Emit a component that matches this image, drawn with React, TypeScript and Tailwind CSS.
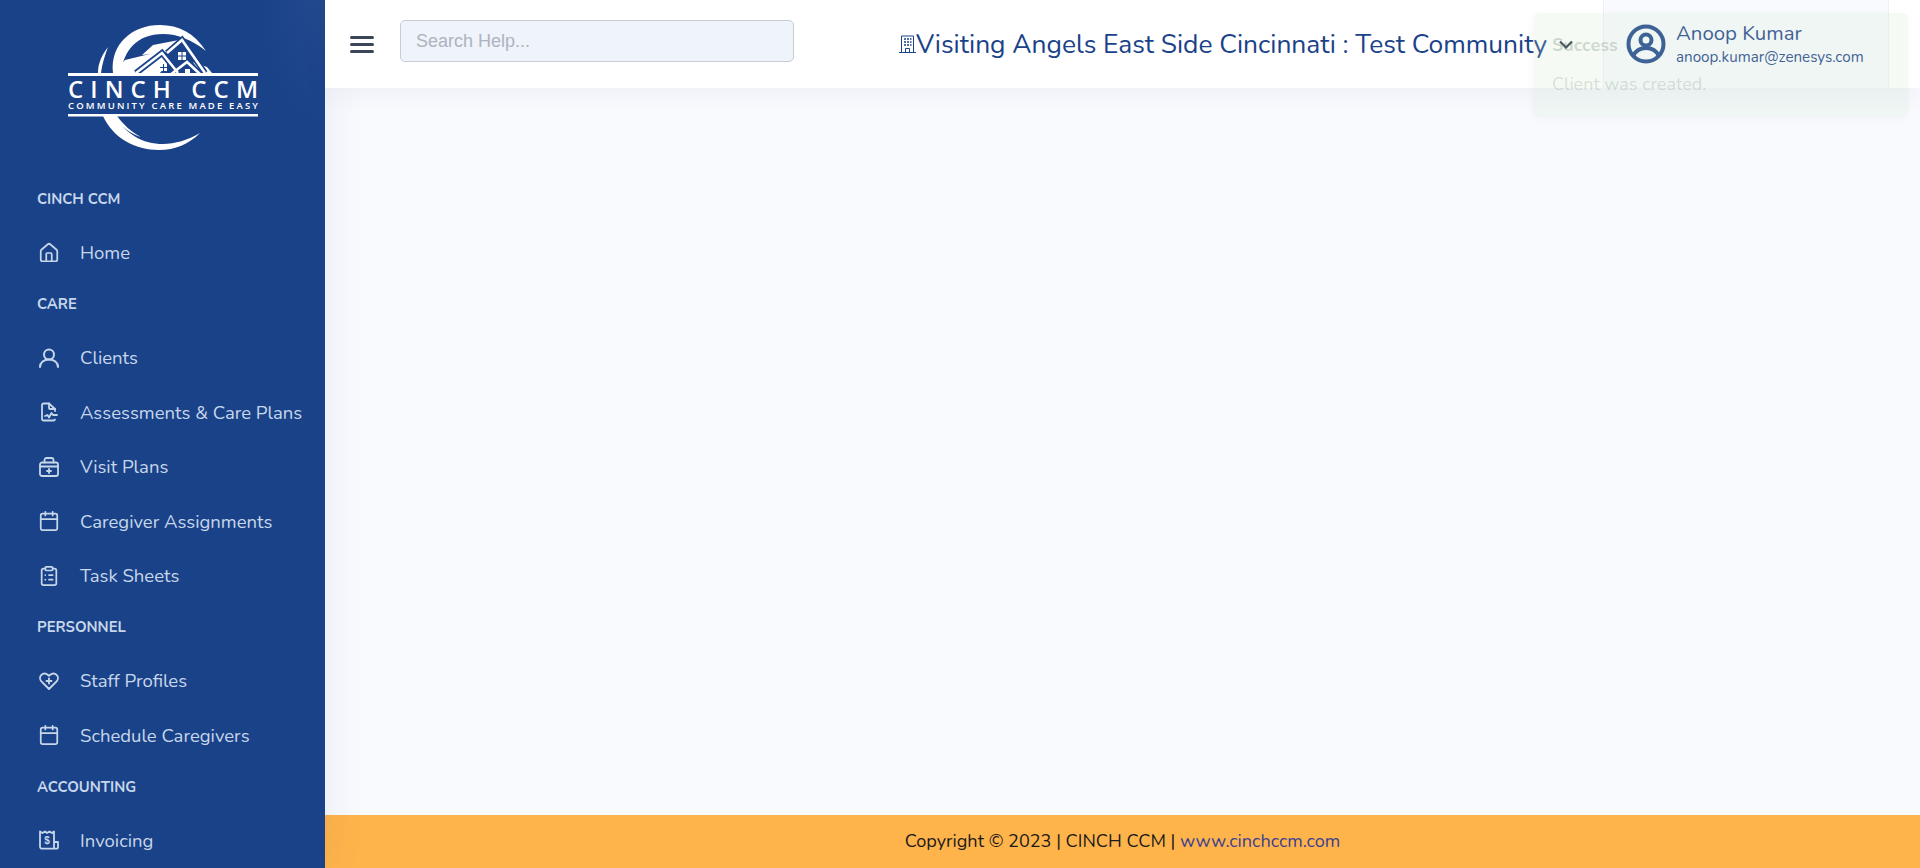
import React from "react";
import { House, Calendar, ClipboardList } from "lucide-react";

const font = "font-['Nunito','Lato','Open_Sans',sans-serif]";

function AssessIcon() {
  return (
    <svg width="20" height="20" viewBox="0 0 20 20" fill="none" stroke="currentColor" strokeWidth="1.8" strokeLinecap="round" strokeLinejoin="round">
      <path d="M16 17.5a1.5 1.5 0 0 1-1.5 1H4.5A1.5 1.5 0 0 1 3 17V3a1.5 1.5 0 0 1 1.5-1.5H10l6 5.5v2" />
      <path d="M10 1.5V6a1 1 0 0 0 1 1h5" />
      <path d="M6 14l2.5-1 1.5 2.5 2.5-4.5 1.5 2H18" />
    </svg>
  );
}

function UserIcon() {
  return (
    <svg width="20" height="20" viewBox="0 0 20 20" fill="none" stroke="currentColor" strokeWidth="2" strokeLinecap="round" strokeLinejoin="round">
      <circle cx="10" cy="6.5" r="5" />
      <path d="M1 19c0-4.5 4-7.500 9-7.500s9 3 9 7.500" />
    </svg>
  );
}

function KitIcon() {
  return (
    <svg width="20" height="20" viewBox="0 0 20 20" fill="none" stroke="currentColor" strokeWidth="1.8" strokeLinecap="round" strokeLinejoin="round">
      <rect x="1" y="5.5" width="18" height="13.5" rx="2" />
      <path d="M5.5 5.5V3a2 2 0 0 1 2-2h5a2 2 0 0 1 2 2v2.5" />
      <path d="M1 9.5h18" />
      <path d="M10 12v4M8 14h4" />
    </svg>
  );
}

function HeartPlusIcon() {
  return (
    <svg width="20" height="20" viewBox="0 0 20 20" fill="none" stroke="currentColor" strokeWidth="1.9" strokeLinecap="round" strokeLinejoin="round">
      <path d="M10 18 2.4 10.4a4.8 4.8 0 0 1 0-6.6 4.5 4.5 0 0 1 6.4 0l1.2 1 1.2-1a4.5 4.5 0 0 1 6.4 0 4.8 4.8 0 0 1 0 6.6z" />
      <path d="M10 7.5v5M7.5 10h5" />
    </svg>
  );
}

function ReceiptIcon() {
  return (
    <svg width="20" height="20" viewBox="0 0 20 20" fill="none" stroke="currentColor" strokeWidth="1.8" strokeLinecap="round" strokeLinejoin="round">
      <path d="M15 12h4v5.5a1.2 1.2 0 0 1-1.2 1.2H3a2 2 0 0 1-2-2V1.5l2.5 1.5L6 1.5 8 3l2.5-1.5L13 3l2-1.500v17" />
      <text x="8" y="14" textAnchor="middle" fontSize="10" fontWeight="700" fill="currentColor" stroke="none" fontFamily="Liberation Sans">$</text>
    </svg>
  );
}

function BuildingIcon() {
  return (
    <svg width="17" height="18" viewBox="0 0 17 18" fill="none" stroke="currentColor" strokeWidth="1" className="shrink-0">
      <path d="M0 17.5h17M2.5 17.5V1h12v16.5" />
      <path d="M5 4h2M8 4h2M11 4h1.5M5 7h2M8 7h2M11 7h1.5M5 10h2M8 10h2M11 10h1.5" strokeWidth="1.4" />
      <path d="M6.5 17.5v-4h4v4" />
    </svg>
  );
}

function Logo() {
  return (
    <svg width="200" height="130" viewBox="60 22 200 130">
      <path d="M113 73C110 44 132 25 160 25c19 0 34 8 46 26-14-11-28-17-43-17-26 0-40 17-42 39z" fill="#fff" />
      <path d="M98 73c0-10 4-18 10-26-3 8-6 17-7 26z" fill="#fff" />
      <path d="M103 116c10 22 32 34 56 34 16 0 30-6 41-17-12 7-25 11-37 11-20 0-38-10-47-28z" fill="#fff" />
      <path d="M117 116c6 8 14 16 24 21-10-3-20-10-27-21z" fill="#fff" />
      <path d="M113 73l12-13 33-8 12 8-10 13z" fill="#fff" />
      <path d="M142 55l11-10 26-5-12 12-7 1z" fill="#fff" />
      <path d="M193 62l14 5 5 6h-12z" fill="#fff" />
      <path d="M167 53 182 40 205 73" fill="none" stroke="#1a4289" strokeWidth="6" />
      <path d="M136 73 162 53 178 73" fill="none" stroke="#1a4289" strokeWidth="6" />
      <path d="M170 75 187 62 201 75" fill="none" stroke="#1a4289" strokeWidth="6" />
      <path d="M167 53 182 40 205 73" fill="none" stroke="#fff" strokeWidth="2.6" />
      <path d="M136 73 162 53 178 73" fill="none" stroke="#fff" strokeWidth="2.6" />
      <path d="M170 75 187 62 201 75" fill="none" stroke="#fff" strokeWidth="2.6" />
      <path d="M178 52h8v8h-8zM160 64h7v7h-7zM185 69h5v4h-5z" fill="#fff" />
      <path d="M182 52v8M178 56h8M163.5 64v7M160 67.5h7" stroke="#1a4289" strokeWidth="1" />
      <rect x="68" y="73" width="190" height="3" fill="#fff" />
      <rect x="68" y="114" width="190" height="2.5" fill="#fff" />
      <rect x="68" y="76" width="190" height="38" fill="#1a4289" />
      <text x="68" y="98" textLength="190" lengthAdjust="spacing" fontSize="24" fontWeight="600" fill="#fff" fontFamily="Open Sans, sans-serif">CINCH CCM</text>
      <text x="68" y="109" textLength="190" lengthAdjust="spacing" fontSize="9.5" fontWeight="600" fill="#fff" fontFamily="Open Sans, sans-serif">COMMUNITY CARE MADE EASY</text>
    </svg>
  );
}

function Label({ children }: { children: React.ReactNode }) {
  return (
    <div className="h-[50.5px] pb-[1px] pl-[37px] flex items-center text-[14.8px] font-bold text-[#c7d7ea] leading-none">
      {children}
    </div>
  );
}

function Item({ icon, children }: { icon: React.ReactNode; children: React.ReactNode }) {
  return (
    <div className="h-[54.5px] pl-[38px] flex items-center text-[18.5px] text-[#c7d7ea] leading-none">
      <span className="w-[22px] h-[22px] mr-[20px] flex items-center justify-center shrink-0">{icon}</span>
      <span className="pt-[1px]">{children}</span>
    </div>
  );
}

export default function App() {
  return (
    <div className={`relative h-[868px] w-full overflow-hidden flex bg-[#f9fafe] ${font}`}>
      <aside className="relative z-[5] w-[325px] shrink-0 bg-[#1a4289] overflow-hidden flex flex-col shadow-[0_0_40px_rgba(30,50,110,0.08)]">
        <div className="absolute right-0 top-0 w-[70px] h-[130px] bg-[radial-gradient(ellipse_at_top_right,rgba(255,255,255,0.04),transparent_70%)]" />
        <div className="h-[175px] shrink-0 pt-[22px] pl-[60px]">
          <Logo />
        </div>
        <Label>CINCH CCM</Label>
        <Item icon={<House size={22} strokeWidth={1.9} />}>Home</Item>
        <Label>CARE</Label>
        <Item icon={<UserIcon />}>Clients</Item>
        <Item icon={<AssessIcon />}>Assessments &amp; Care Plans</Item>
        <Item icon={<KitIcon />}>Visit Plans</Item>
        <Item icon={<Calendar size={22} strokeWidth={1.9} />}>Caregiver Assignments</Item>
        <Item icon={<ClipboardList size={22} strokeWidth={1.9} />}>Task Sheets</Item>
        <Label>PERSONNEL</Label>
        <Item icon={<HeartPlusIcon />}>Staff Profiles</Item>
        <Item icon={<Calendar size={22} strokeWidth={1.9} />}>Schedule Caregivers</Item>
        <Label>ACCOUNTING</Label>
        <Item icon={<ReceiptIcon />}>Invoicing</Item>
      </aside>

      <div className="flex-1 min-w-0 flex flex-col">
        <header className="h-[88px] shrink-0 bg-white flex items-center shadow-[0_6px_24px_rgba(30,50,110,0.05)] z-10">
          <div className="ml-[25px] w-[24px] flex flex-col gap-[4px]">
            <span className="h-[3px] bg-[#3a4658] rounded-sm" />
            <span className="h-[3px] bg-[#3a4658] rounded-sm" />
            <span className="h-[3px] bg-[#3a4658] rounded-sm" />
          </div>
          <div className="ml-[26px] mb-[6px] w-[394px] h-[42px] rounded-[5px] border border-[#c8ccd4] bg-[#eff3fa] pl-[15px] flex items-center font-['Liberation_Sans',sans-serif] text-[18px] text-[#adb4bf]">
            Search Help...
          </div>
          <div className="ml-[105px] flex items-center text-[#1a4289]">
            <BuildingIcon />
            <span className="text-[26.35px] leading-none whitespace-nowrap">Visiting Angels East Side Cincinnati : Test Community</span>
            <svg width="14" height="9" viewBox="0 0 14 9" fill="none" stroke="#2a3547" strokeWidth="2.2" className="ml-[12px] shrink-0">
              <path d="M1 1.5l6 6 6-6" />
            </svg>
          </div>
          <div className="ml-auto mr-[31px] w-[286px] h-[88px] bg-[#f9fafe] border-x border-[#eef0f6] flex items-center pl-[22px]">
            <svg width="40" height="40" viewBox="0 0 40 40" fill="none" stroke="#1a4289" strokeWidth="4" className="shrink-0">
              <circle cx="20" cy="20" r="17.5" />
              <circle cx="20" cy="16" r="5.5" />
              <path d="M7 32c3-6 8-8 13-8s10 2 13 8" />
            </svg>
            <div className="ml-[10px] mb-[1px] flex flex-col text-[#1a4289]">
              <span className="text-[20.4px] leading-[26px]">Anoop Kumar</span>
              <span className="text-[15.2px] leading-[20px] mt-[1px]">anoop.kumar@zenesys.com</span>
            </div>
          </div>
        </header>
        <main className="flex-1" />
        <footer className="h-[53px] shrink-0 bg-[#ffb44b] pt-[1px] flex items-center justify-center text-[18.1px] text-[#1a1a1a]">
          <span>Copyright © 2023 | CINCH CCM | <span className="text-[#3c3f8f]">www.cinchccm.com</span></span>
        </footer>
      </div>

      <div className="absolute z-20 left-[1533px] top-[13px] w-[375px] h-[104px] rounded-[6px] bg-[#cfe5cc]/[0.2] shadow-[0_2px_8px_rgba(0,0,0,0.03)] pl-[19px] pt-[20px]">
        <div className="text-[18px] font-bold leading-[24px] text-[#3c5a40]/[0.22]">Success</div>
        <div className="text-[18px] leading-[24px] mt-[15px] text-[#3c5a40]/[0.18]">Client was created.</div>
      </div>
    </div>
  );
}
